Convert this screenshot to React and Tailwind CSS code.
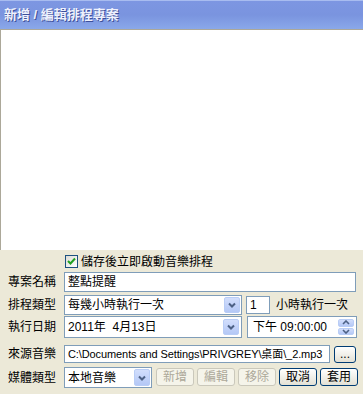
import React from 'react';

const cjk = { fontFamily: '"Liberation Sans", "Noto Sans CJK TC", sans-serif' };

// XP style dropdown arrow button
const DropBtn = () => (
  <div className="flex h-full w-[16px] items-center justify-center rounded-[2px] border border-[#b9cdf6] bg-gradient-to-b from-[#d2defc] to-[#b4c8f6]">
    <svg width="8" height="6" viewBox="0 0 8 6">
      <path d="M1 1.5 L4 4.5 L7 1.5" fill="none" stroke="#4d6185" strokeWidth="2" />
    </svg>
  </div>
);

const SpinBtn = () => (
  <div className="flex h-full w-[16px] flex-col gap-[1px]">
    <div className="flex flex-1 items-center justify-center rounded-[2px] border border-[#b9cdf6] bg-gradient-to-b from-[#d2defc] to-[#b4c8f6]">
      <svg width="8" height="5" viewBox="0 0 8 5">
        <path d="M1 4 L4 1 L7 4" fill="none" stroke="#4d6185" strokeWidth="1.6" />
      </svg>
    </div>
    <div className="flex flex-1 items-center justify-center rounded-[2px] border border-[#b9cdf6] bg-gradient-to-b from-[#d2defc] to-[#b4c8f6]">
      <svg width="8" height="5" viewBox="0 0 8 5">
        <path d="M1 1 L4 4 L7 1" fill="none" stroke="#4d6185" strokeWidth="1.6" />
      </svg>
    </div>
  </div>
);

const Label = ({ children }) => (
  <div className="w-[64px] shrink-0 pl-[8px] text-[12px] leading-none text-black">{children}</div>
);

const XpButton = ({ children, disabled, w = 'w-[38px]' }) =>
  disabled ? (
    <div className={`${w} flex h-full items-center justify-center rounded-[3px] border border-[#cac8bb] bg-[#f5f4ea] text-[12px] text-[#aca899]`}>
      {children}
    </div>
  ) : (
    <div className={`${w} flex h-full items-center justify-center rounded-[3px] border border-[#003c74] bg-gradient-to-b from-[#ffffff] to-[#e3e1d5] text-[12px] text-black`}>
      {children}
    </div>
  );

export default function App() {
  return (
    <div className="flex h-[394px] w-[363px] flex-col overflow-hidden bg-[#ece9d8]" style={cjk}>
      {/* title bar */}
      <div className="flex h-[29px] shrink-0 items-center border-t border-[#a8bcf0] bg-gradient-to-b from-[#7d96e2] via-[#7a94df] to-[#8aa8ea] pl-[4px]">
        <span className="text-[13px] font-bold text-[#eef1fd] [text-shadow:1px_1px_0_#3c4f9a]">
          新增 / 編輯排程專案
        </span>
      </div>

      {/* empty area */}
      <div className="h-[221px] shrink-0 border-t border-l border-[#aca899] bg-white" />

      {/* form */}
      <div className="flex flex-1 flex-col">
        <div className="mt-[5px] flex h-[13px] items-center pl-[65px]">
          <div className="flex h-[13px] w-[13px] items-center justify-center border border-[#1c5180] bg-gradient-to-br from-[#dcdcd6] to-[#ffffff]">
            <svg width="9" height="9" viewBox="0 0 9 9">
              <path d="M1 4 L3.5 6.5 L8 1.5" fill="none" stroke="#21a121" strokeWidth="2" />
            </svg>
          </div>
          <span className="ml-[3px] text-[12px] leading-none text-black">儲存後立即啟動音樂排程</span>
        </div>

        <div className="mt-[4px] flex h-[20px] items-center">
          <Label>專案名稱</Label>
          <div className="flex h-full w-[292px] items-center border border-[#7f9db9] bg-white pl-[3px] text-[12px] text-black">
            整點提醒
          </div>
        </div>

        <div className="mt-[3px] flex h-[20px] items-center">
          <Label>排程類型</Label>
          <div className="flex h-full w-[178px] items-center border border-[#7f9db9] bg-white p-[1px] text-[12px] text-black">
            <span className="flex-1 pl-[2px]">每幾小時執行一次</span>
            <DropBtn />
          </div>
          <div className="ml-[4px] flex h-[18px] w-[24px] items-center border border-[#7f9db9] bg-white pl-[3px] text-[12px] text-black">
            1
          </div>
          <span className="ml-[6px] text-[12px] text-black">小時執行一次</span>
        </div>

        <div className="mt-[1px] flex h-[22px] items-center">
          <Label>執行日期</Label>
          <div className="flex h-full w-[178px] items-center border border-[#7f9db9] bg-white p-[2px] text-[12px] text-black">
            <span className="flex-1 whitespace-pre pl-[1px]">2011年  4月13日</span>
            <div className="h-[16px]">
              <DropBtn />
            </div>
          </div>
          <div className="ml-[5px] flex h-full w-[110px] items-center border border-[#7f9db9] bg-white p-[2px] text-[12px] text-black">
            <span className="flex-1 pl-[3px]">下午 09:00:00</span>
            <SpinBtn />
          </div>
        </div>

        <div className="mt-[7px] flex h-[18px] items-center">
          <Label>來源音樂</Label>
          <div className="flex h-full w-[266px] shrink-0 items-center overflow-hidden whitespace-nowrap border border-[#7f9db9] bg-white pl-[3px] text-[11px] tracking-[-0.1px] text-black">
            C:\Documents and Settings\PRIVGREY\桌面\_2.mp3
          </div>
          <div className="ml-[4px] h-[17px]">
            <XpButton w="w-[22px]">...</XpButton>
          </div>
        </div>

        <div className="mt-[4px] flex h-[21px] items-center">
          <Label>媒體類型</Label>
          <div className="flex h-full w-[88px] shrink-0 items-center border border-[#7f9db9] bg-white p-[1px] text-[12px] text-black">
            <span className="flex-1 pl-[2px]">本地音樂</span>
            <DropBtn />
          </div>
          <div className="ml-[4px] mt-[1px] flex h-[18px] items-center gap-[3px] self-start">
            <XpButton disabled>新增</XpButton>
            <XpButton disabled>編輯</XpButton>
            <XpButton disabled>移除</XpButton>
            <XpButton>取消</XpButton>
            <XpButton>套用</XpButton>
          </div>
        </div>
      </div>
    </div>
  );
}
